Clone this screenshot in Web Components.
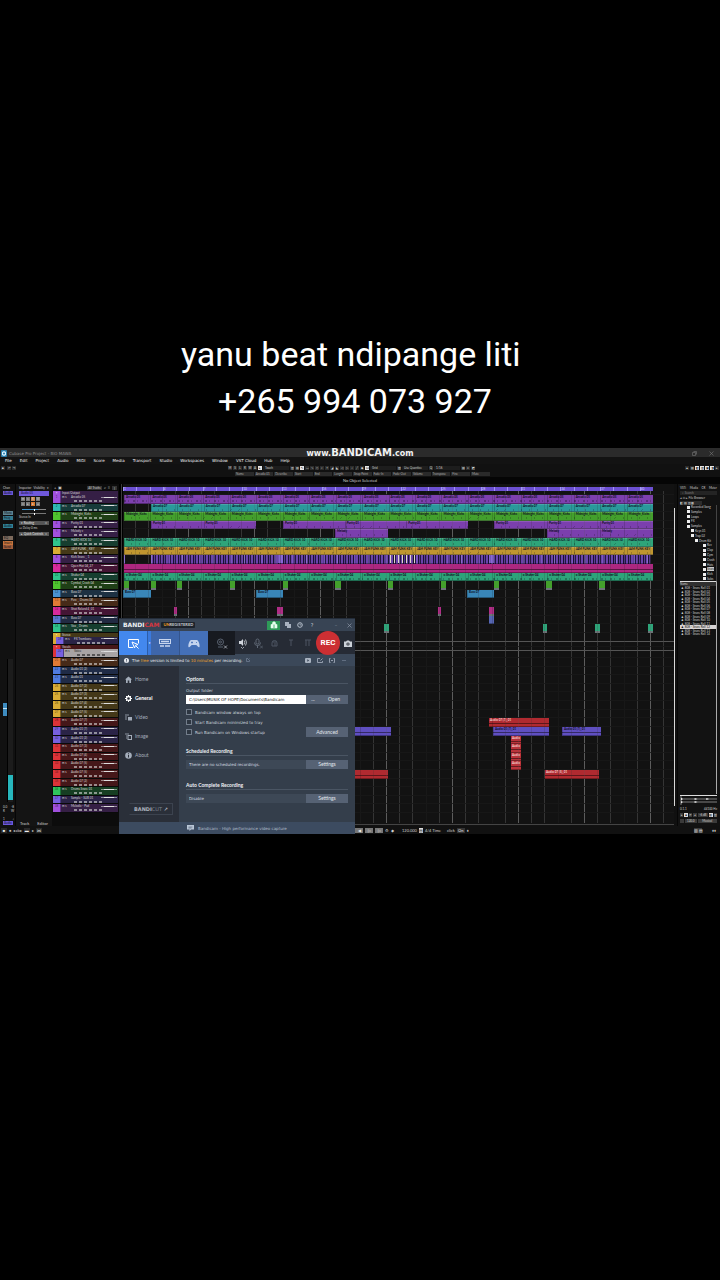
<!DOCTYPE html>
<html lang="en">
<head>
<meta charset="utf-8">
<meta name="viewport" content="width=device-width, initial-scale=1">
<title>Studio screen recording</title>
<style>
  html { background: #000; }
  body { margin: 0; background: #000; color: #ddd; font-family: Roboto, "Liberation Sans", sans-serif; }
</style>
</head>
<body>
<video-caption>yanu beat ndipange liti&nbsp;<br>+265 994 073 927</video-caption>
<studio-desktop></studio-desktop>

<script>
const define = (name, css, render) => customElements.define(name, class extends HTMLElement {
  connectedCallback() {
    if (this.shadowRoot) return;
    const root = this.attachShadow({ mode: 'open' });
    const t = document.createElement('template');
    t.innerHTML = `<style>*{box-sizing:border-box}button{font:inherit;color:inherit;border:0;padding:0;margin:0;background:none}${css}</style>${render(this)}`;
    root.append(t.content.cloneNode(true));
  }
});
const times = (n, f) => Array.from({ length: n }, (_, i) => f(i)).join('');

/* ---------- data ---------- */
const V = '#7760e0', P = '#a050dd', C = '#2fb9b5', G = '#4fc52f', T = '#2fc48c', Y = '#d9ac35',
      M = '#d82a9c', B = '#4a92d0', O = '#e07a35', K = '#5878d0', R = '#dc3338';
const tracks = [
  { folder: 'Input/Output', c: P },
  { n: 'Arcadia 05', c: P }, { n: 'Arcadia 07', c: C }, { n: 'Midnight_Kicks', c: G }, { n: 'Purity 01', c: P },
  { n: 'Melody c', c: P }, { n: 'HARD KICK 10', c: T }, { n: 'JAM FUNK _ KEY', c: Y }, { n: 'Kick Snare _ 1', c: P },
  { n: 'Open Hat 04_27', c: M }, { n: 'Shaker 04', c: T }, { n: 'Cymbal_Crash 04', c: G }, { n: 'Bass 07', c: B },
  { n: 'Perc _ Drums 04', c: O }, { n: 'Shot Roland 4_01', c: M }, { n: 'Bass 07', c: K }, { n: 'Vox _ Drums', c: T },
  { folder: 'Stereo', c: Y }, { n: 'FX Trombone', c: V, nested: 1 },
  { folder: 'Vocals', c: R }, { n: 'Voice', c: V, nested: 1, sel: 1 },
  { n: 'Audio 07', c: O }, { n: 'Audio 01 (2)', c: '#4f7be0' }, { n: 'Audio 01', c: '#4f7be0' },
  { n: 'Audio 07 (2)', c: Y }, { n: 'Audio 07 (3)', c: Y }, { n: 'Audio 07 (4)', c: Y }, { n: 'Audio 07 (5)', c: Y },
  { n: 'Audio 07 (7)', c: R }, { n: 'Audio 01 (7)', c: V }, { n: 'Audio 01 (2)', c: V },
  { n: 'Audio 07 (3)', c: R }, { n: 'Audio 07 (4)', c: R }, { n: 'Audio 07 (5)', c: R }, { n: 'Audio 07 (5)', c: R }, { n: 'Audio 07 (2)', c: R },
  { n: 'Drums Snare 01', c: '#2fc45c' }, { n: 'Sample - SUB 01', c: V }, { n: 'Melodic - Pad', c: P }
];
const rowsTemplate = tracks.map(t => t.folder ? '40fr' : '86fr').join(' ');
const groupLanes = { 17: '96fr', 18: '44fr', 19: '44fr', 20: '68fr' };
const lanesTemplate = tracks.map((t, i) => groupLanes[i] || (t.folder ? '40fr' : '86fr')).join(' ');

/* clips: lane index, start and end on the 551-step timeline, fill, label, look, label spacing */
const clips = [];
const add = (lane, spans, c, label = '', look = '', every = 26) => spans.forEach(([a, b]) => clips.push({ lane, a, b, c, label, look, every }));
add(1, [[2, 531]], '#7d40ae', 'Arcadia 05', 'midi');
add(2, [[29, 531]], '#2a999b', 'Arcadia 07', 'wave');
add(3, [[2, 531]], '#43a02c', 'Midnight_Kicks', 'wave');
add(4, [[29, 134], [161, 346], [372, 531]], '#7b3fae', 'Purity 01', 'wave', 53);
add(5, [[213, 266], [425, 531]], '#7b3fae', 'Melody', 'wave', 53);
add(6, [[2, 531]], '#2ea57a', 'HARD KICK 10', 'wave');
add(7, [[2, 531]], '#c0962f', 'JAM FUNK KEY', 'wave');
add(8, [[2, 3], [29, 529]], '#35205a', '', 'bars');
add(9, [[2, 531]], '#ad2780', '', 'line');
add(10, [[2, 531]], '#2da47a', 'o  Shaker 04', 'midi');
add(11, [[2, 7], [29, 34], [55, 60], [108, 113], [161, 166], [213, 219], [266, 271], [319, 324], [372, 377], [424, 430], [477, 483]], '#43a02c', '', 'foot');
add(12, [[1, 29], [134, 161], [345, 372]], '#3986b8', 'Bass 07');
add(14, [[52, 55], [155, 161], [316, 319], [367, 372]], '#b02d86', '', 'foot');
add(15, [[367, 372]], '#5666b4');
add(16, [[262, 267], [421, 425], [473, 478], [526, 531]], '#2ea57a', '', 'foot');
add(28, [[367, 427]], '#b02a30', 'Audio 07 (7)_01', 'light');
add(29, [[200, 269], [371, 427], [440, 479]], '#5f4fc0', 'Audio 01 (7)_01', 'line');
add(30, [[389, 399]], '#b9323a', 'Audio', 'light');
add(31, [[389, 399]], '#b9323a', 'Audio', 'light');
add(32, [[389, 399]], '#b9323a', 'Audio', 'light');
add(33, [[389, 399]], '#b9323a', 'Audio', 'light');
add(34, [[200, 266], [423, 477]], '#b02a30', 'Audio 07 (5)_01', 'light');

/* ---------- caption ---------- */
define('video-caption', `
  :host{display:block;padding:331px 10px 23px 0;text-align:center;color:#fff;font:34px/47px Roboto,"Liberation Sans",sans-serif}
`, () => `<slot></slot>`);

/* ---------- desktop: the studio window with the recorder over it ---------- */
define('studio-desktop', `
  :host{display:block;position:relative;background:#101010;font:4px/5px Lato,"Liberation Sans",sans-serif;color:#cfcfcf}
  recorder-window{position:absolute;left:119px;bottom:0;width:236px}
  main{display:grid;grid-template-columns:16px 36px 67px 4px 1fr 3px 43px;height:342px}
  .split{background:linear-gradient(90deg,#000 2px,#3a3a3a 2px 3px,#000 3px)}
  .scroll{border-left:1px solid #d8d8d8;margin:24px 0 20px 0}
`, () => `
  <title-strip></title-strip><menu-strip></menu-strip><tool-strip></tool-strip>
  <main>
    <channel-strip></channel-strip><inspector-panel></inspector-panel><track-list></track-list>
    <div class="split"></div><arrange-view></arrange-view><div class="scroll"></div><media-rack></media-rack>
  </main>
  <transport-strip></transport-strip>
  <recorder-window></recorder-window>`);

define('title-strip', `
  :host{display:grid;grid-template-columns:1fr auto 1fr;align-items:center;height:9px;background:#2b2b2b;color:#8c8c8c;font:4px/9px "DejaVu Sans",sans-serif;white-space:nowrap}
  .app{display:flex;gap:2px;align-items:center;padding-left:1px}
  .mark{font:bold 8px/9px "DejaVu Sans",sans-serif;color:#f2f2f2;display:flex;align-items:baseline}
  .mark b{font-size:10px}
  .win{display:flex;justify-content:flex-end;gap:12px;padding-right:6px}
  svg{display:block}
`, () => `
  <div class="app"><svg width="6" height="7" viewBox="0 0 6 7"><rect width="6" height="7" rx="1" fill="#2a7ca8"/><path d="M3 1l2 1v3l-2 1-2-1V2z" fill="#d8f2ff"/><circle cx="3" cy="3.5" r="1" fill="#2a7ca8"/></svg><span>Cubase Pro Project - BIO MAWA</span></div>
  <div class="mark"><span>www.</span><b>BANDICAM</b><span>.com</span></div>
  <div class="win"><svg width="5" height="5" viewBox="0 0 5 5" fill="none" stroke="#777"><path d="M.5 1.5h3v3h-3zM1.5.5h3v3" stroke-width=".6"/></svg><svg width="5" height="5" viewBox="0 0 5 5"><path d="M.5.5l4 4M4.500.500l-4 4" stroke="#777" stroke-width=".6"/></svg></div>`);

define('menu-strip', `
  :host{display:block;background:#131313;color:#f2f2f2}
  nav{display:flex;gap:8px;height:7px;padding-left:5px;font:4px/7px "DejaVu Sans",sans-serif;white-space:nowrap}
  a{color:inherit;text-decoration:none}
`, () => `<nav>${['File', 'Edit', 'Project', 'Audio', 'MIDI', 'Score', 'Media', 'Transport', 'Studio', 'Workspaces', 'Window', 'VST Cloud', 'Hub', 'Help'].map(m => `<a href="#">${m}</a>`).join('')}</nav>`);

define('tool-strip', `
  :host{display:block;height:20px;background:#111;border-bottom:1px solid #050505}
  .tools{display:grid;grid-template-columns:228px 1fr auto;height:8px;align-items:center}
  .g{display:flex;gap:1px;align-items:center}
  button{width:4px;height:4px;background:#2c2c2c;display:grid;place-items:center;font-size:3px;line-height:4px;color:#ddd}
  button.on{background:#e6e6e6;color:#222}
  .g span{width:26px;background:#1d1d1d;line-height:4px;height:4px;font-size:3px;padding-left:2px;white-space:nowrap}
  .quant{display:flex;gap:1px;height:4px;margin:0 32% 0 235px;font-size:3px;line-height:4px;color:#aaa;white-space:nowrap}
  .quant i{font-style:normal;background:#2a2a2a;flex:1;padding:0 1px}
  .info{height:7px;margin-top:1px;background:#050505;text-align:center;line-height:7px;font-size:4px;color:#d0d0d0}
`, () => `
  <div class="tools">
    <div class="g" style="padding-left:1px"><button>■</button><button style="margin-left:1px">↶</button><button>↷</button></div>
    <div class="g">${['M', 'S', 'L', 'R', 'W', 'A'].map(x => `<button>${x}</button>`).join('')}<button class="on">▸</button><span>Touch</span><button>▥</button><button>▤</button>
      <button class="on">↖</button>${[...'▭✎◇⌕×◢◣◁▷♪╱'].map(x => `<button>${x}</button>`).join('')}<button>◆</button><button class="on">⋈</button><span>Grid</span><button>▥</button><span>Use Quantize</span><button>Q</button><span>1/16</span><button>▤</button><button>e</button><button>◩</button></div>
    <div class="g" style="padding-right:1px"><button>▲</button><button>▤</button><button class="on">◧</button><button class="on">▥</button><button class="on">▣</button><button class="on">◨</button><button>▸</button></div>
  </div>
  <div class="quant">${['Name', 'Arcadia 01', 'Describe', 'Start', 'End', 'Length', 'Snap Point', 'Fade-In', 'Fade-Out', 'Volume', 'Transpose', 'Fine', 'Mute'].map(x => `<i>${x}</i>`).join('')}</div>
  <div class="info">No Object Selected</div>`);

/* ---------- left zone ---------- */
define('channel-strip', `
  :host{display:flex;flex-direction:column;padding:2px 1px 0 3px;font-size:3px;line-height:4px;background:#111;border-right:1px solid #060606}
  .b{height:4px;padding-left:1px;white-space:nowrap;color:#10131a;margin-right:1px}
  .fader{display:grid;grid-template-columns:5px 5px;height:143px;margin-top:110px}
  .f{border-right:1px solid #000;padding-top:44px;background:linear-gradient(#ddd 0 0) 4px 10px/1px 8px no-repeat}
  .f i{display:block;width:4px;height:13px;background:linear-gradient(#3e8cc0 5px,#bfe2f5 5px 6px,#3e8cc0 6px)}
  .m{background:#1c1c1c;padding-top:116px}
  .m i{display:block;height:25px;background:#27b7bd}
  .row{display:flex;justify-content:space-between;height:4px}
`, () => `
  <div style="height:5px">Chan</div>
  <div class="b" style="background:#6a57d6">Audio</div>
  <div class="b" style="background:#5c8390;margin-top:16px">Mono</div>
  <div class="b" style="background:#33788e;margin-top:1px">Freq</div>
  <div class="b" style="background:#2f8296;margin-top:4px">Audio</div>
  <div class="b" style="background:#7d6a5c;margin-top:8px">EQ</div>
  <div class="b" style="background:#c8733c;margin-top:1px">Insert</div>
  <div class="b" style="background:#a05c3a">Send</div>
  <div class="fader"><div class="f"><i></i></div><div class="m"><i></i></div></div>
  <div class="row" style="margin-top:3px"><span>0.0</span><span>-8</span></div>
  <div class="row"><span>R</span><span>W</span></div>
  <div class="row" style="margin-top:4px"><span>1</span><span>♪</span></div>
  <div class="b" style="background:#6c58dd">Audio</div>`);

define('inspector-panel', `
  :host{display:flex;flex-direction:column;padding:2px 3px 0 3px;font-size:3px;line-height:4px;background:#141414;white-space:nowrap}
  .h{display:flex;justify-content:space-between;height:5px}
  .n{background:#6f59dc;color:#16102f;height:5px;padding-left:2px;line-height:5px}
  .k{display:grid;grid-template-columns:repeat(4,4px);gap:1px;padding:1px 2px}
  .k button{height:4px;background:#777;font-size:3px;line-height:4px}
  input{appearance:none;display:block;width:24px;height:1px;margin:2px 0 1px 3px;background:linear-gradient(90deg,#3d94cf 65%,#888 65%)}
  input::-webkit-slider-thumb{appearance:none;width:1px;height:2px;background:#fff}
  .s{background:#555;height:4px;padding:0 2px;color:#e8e8e8;margin-top:2px;display:flex;justify-content:space-between}
  .f{display:flex;gap:8px;margin-top:auto;padding-left:1px;font-size:4px;line-height:5px}
`, () => `
  <div class="h"><span>Inspector</span><span>Visibility</span><span>▾</span></div>
  <div class="n">Audio 01</div>
  <div class="k"><button>m</button><button>s</button><button style="background:#c98350">R</button><button>W</button><button>e</button><button>▸</button><button style="background:#d8762c">●</button><button>◂</button></div>
  <input type="range" aria-label="Volume"><input type="range" aria-label="Pan" style="background:#777">
  <div style="height:5px">Stereo In</div>
  <div class="s" style="margin-top:1px"><span>▾ Routing</span><span>○</span></div>
  <div style="height:5px;margin-top:1px">↔ Delay 0 ms</div>
  <div class="s" style="margin-top:1px"><span>▸ Quick Controls</span><span>○</span></div>
  <div class="f"><span>Track</span><span>Editor</span></div>`);

/* ---------- track list ---------- */
define('track-list', `
  :host{display:block;padding:0 1px;background:#0c0c0c}
  .head{display:flex;height:7px;align-items:center;gap:2px;padding:0 1px;font-size:4px;line-height:5px;color:#ccc;white-space:nowrap}
  .head button{background:#333;height:4px;line-height:4px;padding:0 1px;font-size:3px}
  .rows{display:grid;grid-template-rows:${rowsTemplate};height:322px}
`, () => `
  <div class="head"><span>+</span><span>▣</span><button style="margin-left:auto">All Tracks</button><span>⌕</span><span>≡</span><button>⋮</button></div>
  <div class="rows">${tracks.map((t, i) => `<track-row i="${i}"></track-row>`).join('')}</div>`);

define('track-row', `
  :host{display:grid;min-height:0;color:#d9d9d9}
  .r{display:grid;grid-template-columns:8px 1fr;min-height:0;border-bottom:1px solid #0a0a0a;background:color-mix(in srgb,var(--c) 27%,#0d0d0d)}
  .r.nested{grid-template-columns:3px 8px 1fr}
  .r.sel{background:#a8a4a4;color:#222}
  .chip{background:var(--c);font-size:3px;line-height:4px;color:#0009;text-align:center;border-right:1px solid #0006}
  .outer{background:var(--o)}
  .body{display:grid;grid-template-columns:9px 1fr 16px;grid-template-rows:4px 3px;padding:0 1px;font-size:3px;line-height:4px;white-space:nowrap;min-height:0}
  .body b{font-weight:400}
  .body u{height:1px;background:linear-gradient(90deg,#fff7 3px,#ddd 3px 13px,#fff7 13px);align-self:center;text-decoration:none}
  .ic{grid-column:2/4;display:flex;gap:2px;padding-left:3px;height:2px;margin-top:1px}
  .ic i{width:3px;background:currentColor;opacity:.6}
  .folder{border:0;font-size:3px;line-height:4px}
  .folder .name{padding-left:1px}
`, el => {
  const i = +el.getAttribute('i'), t = tracks[i];
  if (t.folder) return `<div class="r folder" style="--c:${t.c}"><div class="chip" style="color:#fff">▪</div><div class="name">${t.folder}</div></div>`;
  return `<div class="r ${t.nested ? 'nested' : ''} ${t.sel ? 'sel' : ''}" style="--c:${t.c};--o:${i < 19 ? Y : R}">${t.nested ? '<div class="outer"></div>' : ''}<div class="chip">${i}</div>
    <div class="body"><span>m s</span><b>${t.n}</b><u></u><span class="ic">${times(6, () => '<i></i>')}</span></div></div>`;
});

/* ---------- arrangement ---------- */
define('arrange-view', `
  :host{display:grid;grid-template-rows:3px 4px 322px 11px 1fr;grid-template-columns:minmax(0,1fr);position:relative;background:#121212;overflow:hidden}
  .ruler{display:grid;grid-template-columns:repeat(40,1fr);margin:0 21px 0 0;background:#6c50d2;font-size:3px;line-height:4px;color:#dcd4ff;grid-row:2}
  .ruler span{border-left:1px solid #a492f5}
  .lanes{display:grid;grid-template-rows:${lanesTemplate};grid-row:3;position:relative}
  .lane{display:grid;grid-template-columns:repeat(551,minmax(0,1fr));grid-template-rows:minmax(0,1fr);min-height:0;border-bottom:1px solid #171717}
  .lane.lit{border-color:#555}
  svg{position:absolute;inset:7px 0 3px 0;width:100%;height:calc(100% - 10px)}
  .over{opacity:.18}
  .foot{grid-row:5;border-top:1px solid #444}
`, () => {
  /* bar lines: every fifth bar is strong, the bar two before it is hidden */
  const lines = times(42, k => {
    const tone = k % 5 === 0 ? '#5c5c5c' : k % 5 === 3 ? '#181818' : '#343434';
    return `<rect x="${Math.round(13.2 * k - 1)}" y="0" width="1" height="10" fill="${tone}"/>`;
  });
  const svg = c => `<svg class="${c}" viewBox="0 0 551 10" preserveAspectRatio="none" aria-hidden="true">${lines}</svg>`;
  return `${svg('')}
  <div class="ruler">${times(40, i => `<span>${i % 3 ? '' : i + 1}</span>`)}</div>
  <div class="lanes">${tracks.map((t, i) => `<div class="lane ${i === 17 || i === 19 ? 'lit' : ''}">${clips.map((c, j) => c.lane === i ? `<timeline-clip j="${j}" style="grid-column:${c.a}/${c.b}"></timeline-clip>` : '').join('')}</div>`).join('')}</div>
  ${svg('over')}<div class="foot"></div>`;
});

define('timeline-clip', `
  :host{display:grid;grid-row:1;min-width:0;min-height:0;margin-bottom:-1px}
  .c{display:flex;background:var(--c);min-width:0;border-bottom:1px solid #0005}
  .c span{flex:1 1 0;min-width:0;white-space:nowrap;font-size:3px;font-weight:700;line-height:4px;color:#0d0b20;padding-left:1px;border-left:1px solid #0003}
  .c.light span{color:#f2d0d0;border:0}
  .light,.line{background:linear-gradient(#0000 5px,#0007 5px 6px,#0000 6px),var(--c)}
  .wave{background:linear-gradient(#fff2 1px,#0000 1px),repeating-linear-gradient(97deg,#0000 0 7px,#0003 7px 8px) 0 5px/100% 2px no-repeat,var(--c)}
  .midi{background:repeating-linear-gradient(90deg,#0004 0 2px,#0000 2px 4px,#0003 4px 5px,#0000 5px 9px) 0 5px/100% 2px no-repeat,var(--c)}
  .bars{background:
    repeating-linear-gradient(90deg,#e0d6c8 0 1px,#0000 1px 4px) 239px 0/25px 100% no-repeat,
    linear-gradient(#9a78f0aa 0 0) 127px 0/5px 100% no-repeat,
    linear-gradient(#9a78f0aa 0 0) 338px 0/5px 100% no-repeat,
    repeating-linear-gradient(90deg,#b9a6ff66 0 1px,#0000 1px 17px,#8a63d888 17px 19px,#0000 19px 31px),
    repeating-linear-gradient(90deg,#6a44ad 0 2px,#1b1230 2px 3px,#5c3a98 3px 4px,#24173f 4px 5px)}
  .foot{border-bottom:2px solid #6c7478}
`, el => {
  const c = clips[+el.getAttribute('j')];
  const n = c.look === 'light' || c.look === 'line' ? 1 : Math.max(1, Math.round((c.b - c.a) / c.every));
  return `<div class="c ${c.look}" style="--c:${c.c}">${c.label ? times(n, () => `<span>${c.label}</span>`) : ''}</div>`;
});

/* ---------- right zone ---------- */
define('media-rack', `
  :host{display:grid;grid-template-rows:7px 14px 77px 1fr 32px;grid-template-columns:minmax(0,1fr);padding:0 3px 0 2px;font-size:3px;line-height:4px;min-width:0;background:#121212;border-left:1px solid #060606}
  .tabs{display:flex;justify-content:space-between;padding-top:2px}
  input{display:block;width:100%;height:4px;border:0;background:#242424;color:#888;font:3px/4px Lato,sans-serif;padding:0 2px}
  .tree{display:grid;align-content:space-between;border-right:1px solid #444;border-bottom:1px solid #ddd;font-size:3px;line-height:4px}
  .tree div{display:flex;align-items:center;gap:1px;height:4px;white-space:nowrap}
  .tree i{width:3px;height:3px;background:#eee;flex:none}
  .tree .sel span{background:#ccc;color:#222}
  .list{border-right:1px solid #aaa}
  .list .h{background:#303030;height:4px}
  .rows{display:grid;grid-template-rows:repeat(14,1fr);height:50px;white-space:nowrap}
  .rows div{padding-left:1px;min-height:0}
  .rows .sel{background:#d8d4d4;color:#111}
  .play{display:flex;flex-direction:column;gap:2px;border-top:1px solid #ddd;margin-top:1px}
  .btns{display:flex;gap:1px}
  .btns button{flex:1;background:#3a3a3a;height:4px;font-size:3px;line-height:4px;white-space:nowrap}
  .btns .on{background:#ddd;color:#222}
`, () => {
  const dirs = [[2, 'Recorded Song'], [2, 'Samples'], [2, 'Loops'], [2, 'FX'], [2, 'Samples'], [4, 'Keys 01'], [4, 'Trap 02'], [6, 'Drum Kit'], [10, 'Rev'], [10, 'Clap'], [10, 'Cym'], [10, 'Crash'], [10, 'Hats'], [10, 'Snare', 1], [10, 'Kick'], [10, 'Subs']];
  return `
  <div class="tabs"><span>VSTi</span><span>Media</span><span>CR</span><span>Meter</span></div>
  <div><input aria-label="Search media" value="⌕ Search"><div style="margin-top:1px">◂ ⌂ ▸ File Browser</div><div style="background:#2c2c2c;width:22px;margin-top:1px">◧ ▤ ▥ ▦</div></div>
  <div class="tree">${dirs.map(([d, n, s]) => `<div class="${s ? 'sel' : ''}" style="padding-left:${d * 2 + 3}px"><i></i><span>${n}</span></div>`).join('')}</div>
  <div class="list"><div class="h">Name</div><div class="rows">${times(14, i => `<div class="${i === 11 ? 'sel' : ''}">♟ 808 - Snare Roll ${String(i + 1).padStart(2, '0')}</div>`)}</div></div>
  <div class="play">
    <svg width="100%" height="9" viewBox="0 0 38 9" preserveAspectRatio="none"><path d="M1 0v9M1 3h37M1 6h37" stroke="#ccc" stroke-width=".6"/><path d="M1 1.500L3 3 1 4.500zM15 2l3 1-3 1zM27 2l3 1-3 1zM1 5l2 1-2 1.500zM15 5l3 1-3 1z" fill="#eee"/></svg>
    <div style="display:flex;justify-content:space-between"><span>0.1.1</span><span>44100 Hz</span></div>
    <div class="btns"><button>▸</button><button class="on">■</button><button>⟳</button><button>◂</button><button style="flex:3">-6 dB</button><button class="on">▤</button><button>▥</button></div>
    <div class="btns"><button>♩</button><button style="flex:3">120.0</button><button style="flex:5">Musical</button></div>
  </div>`;
});

define('transport-strip', `
  :host{display:grid;grid-template-columns:355px 1fr auto;align-items:center;height:8px;padding-top:1px;background:#111;font-size:4px;line-height:5px;white-space:nowrap}
  div{display:flex;gap:2px;align-items:center}
  button{background:#777;width:8px;height:5px;line-height:5px;font-size:4px;color:#eee}
  .d button{background:#292929;width:6px}
`, () => `
  <div class="d" style="padding-left:1px"><button>■</button><span>●</span><span>◂ab▸</span><button>▬</button><span>▸</span><button>⋈</button></div>
  <div><button>◀</button><button>▷</button><button>▷</button><span>⚙</span><span>◆</span><span style="margin-left:6px">120.000</span><button style="width:4px;background:#ddd;color:#222">▤</button><span>4/4 Time</span><span style="margin-left:4px">click</span><button style="background:#333">On</button><span>♦</span></div>
  <div style="padding-right:4px"><button style="background:#3b3b3b">▥ ▤</button><span style="margin-left:8px">♦♦</span></div>`);

/* ---------- recorder ---------- */
define('recorder-window', `
  :host{display:block;background:#343e4b;color:#d0d6de;font:4px/7px "DejaVu Sans",sans-serif;overflow:hidden;white-space:nowrap}
  header{display:flex;align-items:center;height:13px;padding:0 3px 0 4px;background:#384454;border-top:1px solid #242d3a}
  .logo{font:bold 6px/8px "DejaVu Sans","Liberation Sans",sans-serif;color:#eef1f5;margin-right:2px}
  .logo em{font-style:normal;color:#d8363f}
  .un{font:bold 4px/6px Lato,sans-serif;background:#1d232c;color:#c8ccd2;border-radius:1px;padding:0 2px}
  .un em{font-style:normal;color:#f0a020}
  .win{display:flex;margin-left:auto;align-items:center;gap:6px;font-size:5px}
  .win button{display:grid;place-items:center;width:6px;height:9px}
  .win .gift{background:#2e9a58;width:13px;margin-right:-1px}
  svg{display:block}
  .modes{display:grid;grid-template-columns:28px 4px 29px 28px 27px 1fr;height:23px;background:#262b35}
  .modes button{display:grid;place-items:center}
  .t{display:grid;grid-template-columns:15fr 17fr 15fr 17fr 17fr 24fr 15fr;align-items:center;justify-items:center}
  .modes .rec{width:24px;height:24px;border-radius:50%;background:#cc2f33;color:#fff;font:bold 8px/24px Roboto,sans-serif}
  .note{display:flex;align-items:center;height:12px;padding:0 8px 0 5px;gap:3px;background:#3b4859;color:#e8ebef}
  .note em{font-style:normal;color:#f0a32a}
  .note .end{margin-left:auto;display:flex;gap:6px}
  .main{display:grid;grid-template-columns:60px 1fr;height:156px}
  aside{background:#2a2f39;display:flex;flex-direction:column;padding:4px 0 7px 0}
  nav{display:flex;flex-direction:column}
  .cut{margin:auto 6px 0 10px;height:12px;border:1px solid #3c434f;border-left-color:#2a2f39;font:bold 5px/10px "DejaVu Sans",sans-serif;color:#aab2be;text-align:center}
  .cut i{font-style:normal;font-weight:400;color:#7f8895}
  form{display:grid;align-content:start;padding:9px 7px 0 7px}
  h2{margin:0;font:bold 5px/8px Lato,sans-serif;color:#eef1f4;border-bottom:1px solid #4a5563;height:9px}
  .line{display:grid;grid-template-columns:1fr 42px;height:9px}
  .line>input{min-width:0;border:0;border-radius:0;background:#3d4856;color:#d3d9e0;font:inherit;padding:0 3px}
  .line.path{grid-template-columns:1fr 14px 28px}
  .line.path>input{background:#fff;color:#111}
  .line button{background:#566274;color:#e2e6eb;font:5px/9px Lato,sans-serif}
  .chk{display:flex;align-items:center;gap:3px;height:10px}
  .chk input{appearance:none;margin:0;width:6px;height:6px;border:1px solid #727d8b;background:#2d3641}
  footer{display:flex;align-items:center;gap:4px;height:12px;padding-left:68px;background:#3c4b60;color:#b4bfcd}
`, () => `
  <header><span class="logo">BANDI<em>CAM</em></span><span class="un"><em>UN</em>REGISTERED</span>
    <div class="win">
      <button class="gift" aria-label="Gift"><svg width="8" height="8" viewBox="0 0 8 8"><path d="M2.500 4V2.200a1.500 1.500 0 013 0V4M1 3.500h6V7H1z" fill="#e9fff0" stroke="#e9fff0" stroke-width=".6"/><path d="M4 3.500V7" stroke="#2e9a58" stroke-width=".8"/></svg></button>
      <button aria-label="Copy"><svg width="6" height="6" viewBox="0 0 6 6"><path d="M0 0h4v4H0zM2 2h4v4H2z" fill="#a8b2c0"/></svg></button>
      <button aria-label="Time"><svg width="6" height="6" viewBox="0 0 6 6" fill="none" stroke="#b4bdc9"><circle cx="3" cy="3" r="2.300"/><path d="M3 1.500V3h1.500" stroke-width=".7"/></svg></button>
      <button aria-label="Help">?</button><button aria-label="Minimize" style="color:#7f8a99;margin-left:12px">–</button>
      <button aria-label="Close" style="margin-left:1px"><svg width="5" height="5" viewBox="0 0 5 5"><path d="M.5.5l4 4M4.500.500l-4 4" stroke="#8c97a6" stroke-width=".7"/></svg></button>
    </div></header>
  <div class="modes">
    <button aria-label="Rectangle" style="background:#4388ee"><svg width="13" height="11" viewBox="0 0 13 11" fill="none" stroke="#fff"><path d="M6 9.500H1.500v-8h10v4"/><path d="M5 4l6 2.500-2.500.8L7.500 10zM9 8l2.500 2.500"/></svg></button>
    <button aria-label="More" style="background:#3b7add;font-size:3px;color:#fff;border-left:1px solid #2d5ea8">▾</button>
    <button aria-label="Device" style="background:#3e66aa;border-right:1px solid #34558d"><svg width="12" height="9" viewBox="0 0 12 9" fill="none" stroke="#c7d5ee"><rect x=".5" y=".5" width="11" height="4"/><path d="M2 2.500h8M1 7h4M6 7h5" stroke-width="1.500"/></svg></button>
    <button aria-label="Game" style="background:#4470b8"><svg width="12" height="9" viewBox="0 0 12 9"><path d="M3 1h6c2 1 3 5 2.500 7C10 9 9 6 8 6H4C3 6 2 9 .5 8 0 6 1 2 3 1z" fill="#c3d3ee"/><path d="M3 3.500h2M4 2.500v2M8 3.500h1" stroke="#4470b8" stroke-width=".8"/></svg></button>
    <button aria-label="Webcam" style="background:#171a20"><svg width="12" height="11" viewBox="0 0 12 11" fill="none" stroke="#596270"><circle cx="4.500" cy="4" r="3"/><circle cx="4.500" cy="4" r="1"/><path d="M2 9h5"/><path d="M8 7.500l3 3M11 7.500l-3 3" stroke="#b8bec8" stroke-width=".8"/></svg></button>
    <div class="t">
      <svg width="8" height="11" viewBox="0 0 8 11" fill="none" stroke="#d0d5dc"><path d="M0 3h2l2-2v7L2 6H0z" fill="#d0d5dc" stroke="none"/><path d="M5 2.500q1.500 2 0 4M6.500 1.500q2 3 0 6" stroke-width=".8"/><path d="M2 9l1.500 1.500L5 9" stroke-width=".7"/></svg>
      <svg width="9" height="11" viewBox="0 0 9 11" fill="none" stroke="#606977"><rect x="2" y="1" width="3" height="5" rx="1.500"/><path d="M.5 4.500q0 3 3 3t3-3M3.500 7.500V10"/><path d="M6 7.500l3 3M9 7.500l-3 3" stroke-width=".7"/></svg>
      <svg width="7" height="8" viewBox="0 0 7 8" fill="none" stroke="#4c5563"><path d="M1 4a2.500 2.500 0 015 0v3H4V4M1 4v3h3M2 3h3"/></svg>
      <svg width="6" height="8" viewBox="0 0 6 8" fill="none" stroke="#4c5563"><path d="M1 1h4M3 1v6"/></svg>
      <svg width="6" height="8" viewBox="0 0 6 8" fill="none" stroke="#4c5563"><path d="M1 1v6M4 1v6M0 1h6"/></svg>
      <button class="rec">REC</button>
      <svg width="8" height="7" viewBox="0 0 8 7"><path d="M0 1.500h2L3 .5h2l1 1h2V7H0z" fill="#ccd1d8"/><circle cx="4" cy="4" r="1.600" fill="#262b35"/><circle cx="4" cy="4" r=".7" fill="#ccd1d8"/></svg>
    </div>
  </div>
  <div class="note"><svg width="5" height="5" viewBox="0 0 5 5"><circle cx="2.500" cy="2.500" r="2.500" fill="#e6e9ee"/><path d="M2.500 1v1.800M2.500 3.400v.8" stroke="#3b4859" stroke-width=".8"/></svg><span>The <em>free</em> version is limited to <em>10 minutes</em> per recording.</span>
    <svg width="4" height="4" viewBox="0 0 4 4" fill="none" stroke="#77849a" stroke-width=".7"><path d="M2 .5H.5v3h3V2M2 2L3.500.500"/></svg>
    <div class="end"><svg width="6" height="5" viewBox="0 0 6 5"><rect width="6" height="5" rx="1" fill="#a9b3c1"/><path d="M2.300 1.300L4.200 2.500 2.300 3.700z" fill="#3b4859"/></svg><svg width="6" height="5" viewBox="0 0 6 5" fill="none" stroke="#a9b3c1" stroke-width=".8"><path d="M3 .5H.5v4h5V3M3.500 2.500l2-2"/></svg><svg width="6" height="5" viewBox="0 0 6 5" fill="none" stroke="#a9b3c1" stroke-width=".8"><path d="M1.500.5h-1v4h1M4.500.5h1v4h-1M2 2.500h2"/></svg><svg width="6" height="5" viewBox="0 0 6 5"><path d="M1 2.500h4" stroke="#6b788b" stroke-width=".8"/></svg></div></div>
  <div class="main">
    <aside><nav>
      <recorder-tab icon="home">Home</recorder-tab><recorder-tab icon="gear" active>General</recorder-tab><recorder-tab icon="video">Video</recorder-tab><recorder-tab icon="image">Image</recorder-tab><recorder-tab icon="info">About</recorder-tab>
    </nav><div class="cut">BANDI<i>CUT</i> ↗</div></aside>
    <form>
      <h2>Options</h2>
      <label for="out" style="margin-top:3px;height:8px">Output folder</label>
      <div class="line path"><input id="out" value="C:\\Users\\MUSIK OF HOPE\\Documents\\Bandicam"><button type="button">...</button><button type="button">Open</button></div>
      <label class="chk" style="margin-top:3px"><input type="checkbox">Bandicam window always on top</label>
      <label class="chk"><input type="checkbox">Start Bandicam minimized to tray</label>
      <div class="line" style="height:10px"><label class="chk"><input type="checkbox">Run Bandicam on Windows startup</label><button type="button">Advanced</button></div>
      <h2 style="margin-top:10px">Scheduled Recording</h2>
      <div class="line" style="margin-top:4px"><input aria-label="Scheduled recording" value="There are no scheduled recordings." readonly><button type="button">Settings</button></div>
      <h2 style="margin-top:12px">Auto Complete Recording</h2>
      <div class="line" style="margin-top:4px"><input aria-label="Auto complete recording" value="Disable" readonly><button type="button">Settings</button></div>
    </form>
  </div>
  <footer><svg width="7" height="6" viewBox="0 0 7 6"><path d="M0 0h7v4.500H4L2.500 6V4.500H0z" fill="#b9c6d6"/><path d="M1.500 2h4M1.500 3h3" stroke="#3c4b60" stroke-width=".5"/></svg><span>Bandicam - High performance video capture</span></footer>`);

const tabIcons = {
  home: '<path d="M0 3.500L3.500.500 7 3.500H6V7H4.300V4.500H2.700V7H1V3.500z" fill="currentColor"/>',
  gear: '<circle cx="3.500" cy="3.500" r="2" fill="none" stroke="currentColor" stroke-width="1.300"/><path d="M3.500 0v1.500M3.500 5.500V7M0 3.500h1.500M5.500 3.500H7M1 1l1 1M5 5l1 1M6 1L5 2M2 5L1 6" stroke="currentColor"/>',
  video: '<path d="M0 1h4M0 3h2M0 5h2" stroke="currentColor" stroke-width=".8"/><rect x="3" y="3" width="4" height="3.500" fill="currentColor"/>',
  image: '<path d="M0 1h4M1 3h1M1 5h1" stroke="currentColor" stroke-width=".8"/><rect x="3" y="2.500" width="3.500" height="4" fill="none" stroke="currentColor"/>',
  info: '<circle cx="3.500" cy="3.500" r="3.300" fill="currentColor"/><path d="M3.500 3v2.500M3.500 1.300v1" stroke="#2a2f39"/>'
};
define('recorder-tab', `
  :host{display:block;height:19px;color:#a4adba;font:5px/7px Lato,sans-serif}
  :host([active]){color:#fff;font-weight:700}
  a{display:flex;align-items:center;gap:3px;height:100%;padding-left:6px;color:inherit;text-decoration:none}
`, el => `<a href="#"><svg width="7" height="7" viewBox="0 0 7 7" aria-hidden="true">${tabIcons[el.getAttribute('icon')]}</svg><slot></slot></a>`);
</script>
</body>
</html>
